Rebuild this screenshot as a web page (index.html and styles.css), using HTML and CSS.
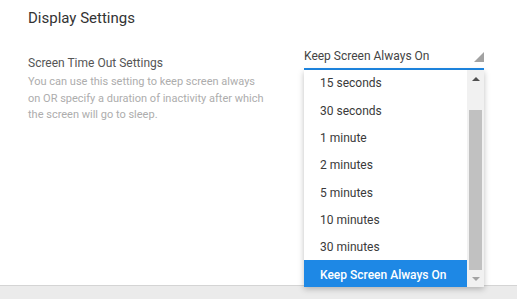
FILE: index.html
```html
<!DOCTYPE html>
<html lang="en">
<head>
    <meta charset="UTF-8">
    <meta name="viewport" content="width=device-width, initial-scale=1.0">
    <title>Display Settings</title>
    <link rel="stylesheet" href="styles.css">
</head>
<body>
    <div class="page">
        <h1 class="page-title">Display Settings</h1>
        <div class="setting-row">
            <div class="setting-info">
                <p class="setting-label">Screen Time Out Settings</p>
                <p class="setting-desc">You can use this setting to keep screen always on OR specify a duration of inactivity after which the screen will go to sleep.</p>
            </div>
            <div class="select">
                <span class="select-value">Keep Screen Always On</span>
                <span class="select-corner"></span>
                <div class="dropdown">
                    <ul class="dropdown-list">
                        <li>15 seconds</li>
                        <li>30 seconds</li>
                        <li>1 minute</li>
                        <li>2 minutes</li>
                        <li>5 minutes</li>
                        <li>10 minutes</li>
                        <li>30 minutes</li>
                        <li class="selected">Keep Screen Always On</li>
                    </ul>
                    <div class="scrollbar">
                        <div class="scroll-btn"><span class="arrow-up"></span></div>
                        <div class="scroll-track"><div class="scroll-thumb"></div></div>
                        <div class="scroll-btn"><span class="arrow-down"></span></div>
                    </div>
                </div>
            </div>
        </div>
    </div>
    <div class="footer"></div>
</body>
</html>
```

FILE: styles.css
```css
* {
    margin: 0;
    padding: 0;
    box-sizing: border-box;
}

body {
    font-family: Roboto, "Liberation Sans", sans-serif;
    background: #fff;
    height: 299px;
    overflow: hidden;
    display: flex;
    flex-direction: column;
}

.page {
    height: 285px;
    padding: 9px 0 0 28px;
}

.page-title {
    font-size: 15px;
    font-weight: 400;
    line-height: 18px;
    color: #333;
}

.setting-row {
    display: grid;
    grid-template-columns: 276px 180px;
    align-items: start;
    margin-top: 19px;
}

.setting-info {
    padding-top: 9px;
}

.setting-label {
    font-size: 12px;
    line-height: 16px;
    color: #555;
}

.setting-desc {
    margin-top: 3px;
    max-width: 240px;
    font-size: 11px;
    line-height: 16.5px;
    color: #adadad;
}

.select {
    position: relative;
    height: 24px;
    border-bottom: 2px solid #1e88e5;
}

.select-value {
    display: block;
    font-size: 12px;
    line-height: 20px;
    color: #444;
}

.select-corner {
    position: absolute;
    right: 0;
    bottom: 6px;
    width: 0;
    height: 0;
    border-left: 10px solid transparent;
    border-bottom: 10px solid #a2a2a2;
}

.dropdown {
    position: absolute;
    top: 100%;
    left: 0;
    margin-top: 2px;
    width: 180px;
    height: 217px;
    display: flex;
    background: #fff;
    box-shadow: 0 2px 6px rgba(0, 0, 0, 0.25);
    z-index: 2;
}

.dropdown-list {
    flex: 1;
    list-style: none;
    display: flex;
    flex-direction: column;
    justify-content: flex-end;
    overflow: hidden;
}

.dropdown-list li {
    flex: none;
    height: 27.33px;
    padding: 3px 16px 0;
    font-size: 12px;
    line-height: 24px;
    color: #3a3a3a;
    white-space: nowrap;
}

.dropdown-list li.selected {
    background: #1e88e5;
    color: #fff;
    font-weight: 500;
}

.scrollbar {
    width: 17px;
    background: #f1f1f1;
    display: flex;
    flex-direction: column;
}

.scroll-btn {
    height: 17px;
    display: flex;
    align-items: center;
    justify-content: center;
}

.scroll-track {
    flex: 1;
    display: flex;
    flex-direction: column;
    justify-content: flex-end;
}

.scroll-thumb {
    height: 160px;
    margin: 0 2px;
    background: #c1c1c1;
}

.arrow-up {
    width: 0;
    height: 0;
    border-left: 4px solid transparent;
    border-right: 4px solid transparent;
    border-bottom: 4px solid #505050;
}

.arrow-down {
    width: 0;
    height: 0;
    border-left: 4px solid transparent;
    border-right: 4px solid transparent;
    border-top: 4px solid #a3a3a3;
}

.footer {
    flex: 1;
    background: #ebebeb;
    border-top: 1px solid #d4d4d4;
}
```
